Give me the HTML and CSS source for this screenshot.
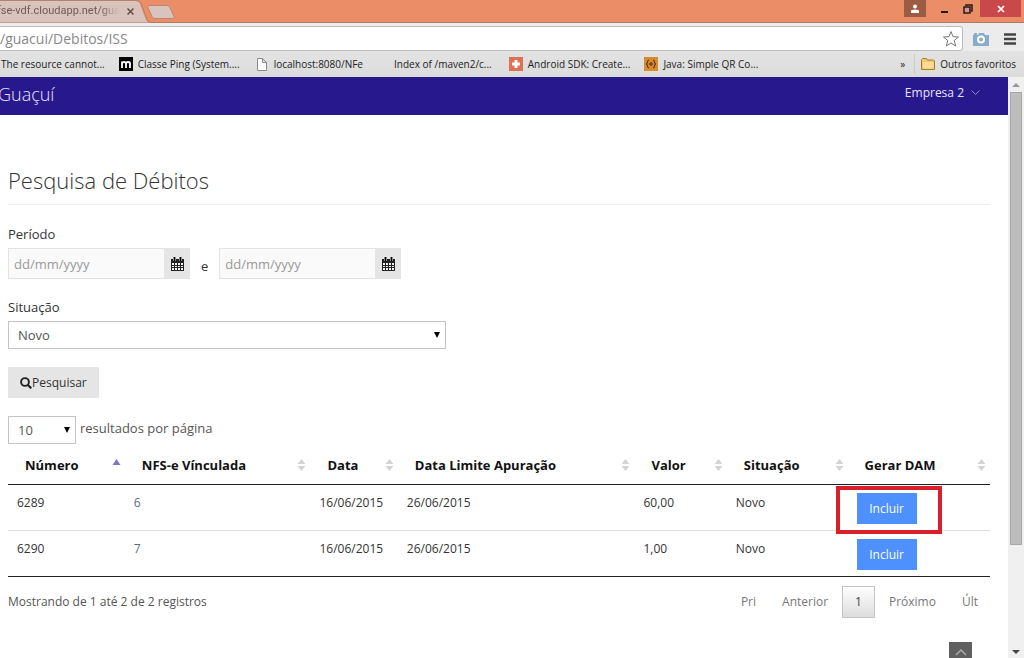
FILE: index.html
```html
<!DOCTYPE html>
<html lang="pt-BR">
<head>
<meta charset="utf-8">
<title>Pesquisa de Débitos</title>
<link rel="stylesheet" href="styles.css">
</head>
<body>
<div class="titlebar">
  <svg class="tab-shape" viewBox="0 0 176 23" width="176" height="23" aria-hidden="true">
    <path d="M0 1h136q3 0 4 3l6 16q1 2 4 2.500H0z" fill="#d9c3bd"/>
    <path d="M0 .5h136q4 0 5 3l6 16q1 3 4 3" fill="none" stroke="#b87f6a"/>
    <path d="M149 5.500h18q2 0 3 2l4 9q1 2-1 2h-18q-2 0-3-2l-4-9q-1-2 1-2z" fill="#d9c3bd" stroke="#bd8570"/>
  </svg>
  <div class="tab">
    <span class="tab-title"><span>nfse-vdf.cloudapp.net/gua</span></span>
    <button class="tab-close" aria-label="Fechar guia"><svg width="7" height="7" viewBox="0 0 7 7"><path d="M.5.5l6 6M6.500.5l-6 6" stroke="#6b4c44" stroke-width="1.500"/></svg></button>
  </div>
  <div class="window-buttons">
    <button class="win user" aria-label="Usuário"><svg width="8" height="9" viewBox="0 0 8 9"><circle cx="4" cy="2.500" r="2" fill="#fff"/><path d="M0 9V7q0-1.500 4-1.500T8 7v2z" fill="#fff"/></svg></button>
    <button class="win" aria-label="Minimizar"><svg width="10" height="10" viewBox="0 0 10 10"><path d="M1 7h7v2H1z" fill="#2b1a14"/></svg></button>
    <button class="win" aria-label="Restaurar"><svg width="10" height="10" viewBox="0 0 10 10"><path d="M3 2V1h6v6H8" fill="none" stroke="#2b1a14" stroke-width="1.500"/><rect x="1" y="3" width="6" height="6" fill="#c99" stroke="#2b1a14" stroke-width="1.500"/></svg></button>
    <button class="win close" aria-label="Fechar"><svg width="8" height="8" viewBox="0 0 8 8"><path d="M1 1l6 6M7 1L1 7" stroke="#fff" stroke-width="1.700"/></svg></button>
  </div>
</div>
<div class="toolbar">
  <div class="address">
    <input class="url" type="text" value="/guacui/Debitos/ISS" aria-label="Endereço">
    <button class="icon-button" aria-label="Favoritar"><svg width="18" height="18" viewBox="0 0 18 18"><path d="M9 1.500l2 5.200 5.500.3-4.300 3.500 1.500 5.500L9 13l-4.700 3 1.500-5.500L1.500 7 7 6.700z" fill="#fff" stroke="#777" stroke-linejoin="round"/></svg></button>
  </div>
  <button class="icon-button" aria-label="Captura de tela"><svg width="16" height="14" viewBox="0 0 16 14"><path d="M0 3h1V1h3v2h1l1-2h5l1 2h4v11H0z" fill="#8aabc9"/><circle cx="8" cy="7.500" r="4" fill="#fff"/><circle cx="8" cy="7.500" r="2" fill="#8aabc9"/></svg></button>
  <button class="icon-button" aria-label="Menu"><svg width="12" height="12" viewBox="0 0 12 12"><path d="M0 1.500h12M0 6h12M0 10.500h12" stroke="#444" stroke-width="2.500"/></svg></button>
</div>
<nav class="bookmarks" aria-label="Favoritos">
  <a class="bookmark" href="#">The resource cannot...</a>
  <a class="bookmark b-ping" href="#"><svg width="14" height="14" viewBox="0 0 14 14"><path d="M0 0h14v14H0z"/><path d="M3 11V4.500M3 6.500q0-1.500 2-1.500t2 1.500V11M7 6.500Q7 5 9 5t2 1.500V11" fill="none" stroke="#fff" stroke-width="1.800"/></svg>Classe Ping (System....</a>
  <a class="bookmark b-local" href="#"><svg width="10" height="13" viewBox="0 0 10 13"><path d="M.5.5h5l4 4v8h-9zM5.500.5v4h4" fill="#fff" stroke="#8c8c8c"/></svg>localhost:8080/NFe</a>
  <a class="bookmark b-index" href="#">Index of /maven2/c...</a>
  <a class="bookmark" href="#"><svg width="14" height="14" viewBox="0 0 14 14"><path d="M0 0h14v14H0z" fill="#dc7154"/><path d="M5.500 3h3v2.500H11v3H8.500V11h-3V8.500H3v-3h2.500z" fill="#fff"/></svg>Android SDK: Create...</a>
  <a class="bookmark" href="#"><svg width="14" height="14" viewBox="0 0 14 14"><path d="M0 0h14v14H0z" fill="#d98a2b"/><path d="M5 3Q3.500 3 3.500 5T2 7q1.500 0 1.500 2T5 11M9 3q1.500 0 1.500 2T12 7q-1.500 0-1.500 2T9 11" fill="none" stroke="#4b2b08"/><circle cx="7" cy="7" r="1.300" fill="none" stroke="#4b2b08"/></svg>Java: Simple QR Co...</a>
  <button class="more" aria-label="Mais favoritos">»</button>
  <a class="bookmark others" href="#"><svg width="14" height="12" viewBox="0 0 14 12"><path d="M.5 11.500v-10l1-1h4l1 1.500h6l1 1v8.500z" fill="#f3c667" stroke="#a77b32"/><path d="M2 4h10.500v6.500H2z" fill="#fbdc92"/></svg>Outros favoritos</a>
</nav>
<div class="viewport">
  <div class="page">
    <header class="navbar">
      <span class="brand">Guaçuí</span>
      <button class="account">Empresa 2 <svg width="9" height="6" viewBox="0 0 9 6"><path d="M.5.5l4 4 4-4" fill="none" stroke="#8f88d0"/></svg></button>
    </header>
    <main class="content">
      <h1>Pesquisa de Débitos</h1>
      <form class="search">
        <label class="field-label" for="from">Período</label>
        <div class="period">
          <div class="date"><input id="from" type="text" placeholder="dd/mm/yyyy"><button type="button" aria-label="Abrir calendário inicial"><svg width="13" height="14" viewBox="0 0 13 14"><path d="M0 2h13v12H0z" fill="#222"/><path d="M1 6h2v2H1zm3 0h2v2H4zm3 0h2v2H7zm3 0h2v2h-2zM1 9h2v1H1zm3 0h2v1H4zm3 0h2v1H7zm3 0h2v1h-2zM1 11h2v2H1zm3 0h2v2H4zm3 0h2v2H7zm3 0h2v2h-2z" fill="#f4f4f4"/><path d="M3.500 0v4M9.500 0v4" stroke="#e6e6e6" stroke-width="3"/><path d="M3.500 0v4M9.500 0v4" stroke="#000" stroke-width="1.800"/></svg></button></div>
          <label class="and" for="to">e</label>
          <div class="date"><input id="to" type="text" placeholder="dd/mm/yyyy"><button type="button" aria-label="Abrir calendário final"><svg width="13" height="14" viewBox="0 0 13 14"><path d="M0 2h13v12H0z" fill="#222"/><path d="M1 6h2v2H1zm3 0h2v2H4zm3 0h2v2H7zm3 0h2v2h-2zM1 9h2v1H1zm3 0h2v1H4zm3 0h2v1H7zm3 0h2v1h-2zM1 11h2v2H1zm3 0h2v2H4zm3 0h2v2H7zm3 0h2v2h-2z" fill="#f4f4f4"/><path d="M3.500 0v4M9.500 0v4" stroke="#e6e6e6" stroke-width="3"/><path d="M3.500 0v4M9.500 0v4" stroke="#000" stroke-width="1.800"/></svg></button></div>
        </div>
        <label class="field-label" for="status">Situação</label>
        <div class="select status"><select id="status"><option>Novo</option></select><svg width="6" height="6" viewBox="0 0 6 6"><path d="M0 0h6L3 6z"/></svg></div>
        <button class="submit" type="button"><svg width="12" height="12" viewBox="0 0 12 12"><circle cx="5" cy="5" r="3.900" fill="none" stroke="#222" stroke-width="1.900"/><path d="M8 8l3.300 3.300" stroke="#222" stroke-width="2.200"/></svg>Pesquisar</button>
      </form>
      <div class="length">
        <div class="select count"><select id="count"><option>10</option></select><svg width="6" height="6" viewBox="0 0 6 6"><path d="M0 0h6L3 6z"/></svg></div>
        <label for="count">resultados por página</label>
      </div>
      <table class="results">
        <colgroup><col class="c-number"><col class="c-nfse"><col class="c-date"><col class="c-limit"><col class="c-value"><col class="c-status"><col class="c-dam"></colgroup>
        <thead><tr>
          <th><div class="head">Número<svg width="9" height="12" viewBox="0 0 9 12"><path d="M4.500 0l4 6h-8z" fill="#7f78c0"/></svg></div></th>
          <th><div class="head">NFS-e Vínculada<svg width="9" height="12" viewBox="0 0 9 12"><path d="M4.500 0l4 5h-8zM.5 7h8l-4 5z" fill="#d4d4d4"/></svg></div></th>
          <th><div class="head">Data<svg width="9" height="12" viewBox="0 0 9 12"><path d="M4.500 0l4 5h-8zM.5 7h8l-4 5z" fill="#d4d4d4"/></svg></div></th>
          <th><div class="head">Data Limite Apuração<svg width="9" height="12" viewBox="0 0 9 12"><path d="M4.500 0l4 5h-8zM.5 7h8l-4 5z" fill="#d4d4d4"/></svg></div></th>
          <th><div class="head">Valor<svg width="9" height="12" viewBox="0 0 9 12"><path d="M4.500 0l4 5h-8zM.5 7h8l-4 5z" fill="#d4d4d4"/></svg></div></th>
          <th><div class="head">Situação<svg width="9" height="12" viewBox="0 0 9 12"><path d="M4.500 0l4 5h-8zM.5 7h8l-4 5z" fill="#d4d4d4"/></svg></div></th>
          <th><div class="head">Gerar DAM<svg width="9" height="12" viewBox="0 0 9 12"><path d="M4.500 0l4 5h-8zM.5 7h8l-4 5z" fill="#d4d4d4"/></svg></div></th>
        </tr></thead>
        <tbody>
          <tr><td>6289</td><td><a href="#">6</a></td><td>16/06/2015</td><td>26/06/2015</td><td>60,00</td><td>Novo</td><td><div class="action marked"><button class="include">Incluir</button></div></td></tr>
          <tr><td>6290</td><td><a href="#">7</a></td><td>16/06/2015</td><td>26/06/2015</td><td>1,00</td><td>Novo</td><td><div class="action"><button class="include">Incluir</button></div></td></tr>
        </tbody>
      </table>
      <div class="table-footer">
        <span>Mostrando de 1 até 2 de 2 registros</span>
        <nav class="pager" aria-label="Paginação">
          <a href="#">Pri</a><a href="#">Anterior</a><a class="current" href="#">1</a><a href="#">Próximo</a><a href="#">Últ</a>
        </nav>
      </div>
    </main>
    <button class="to-top" aria-label="Voltar ao topo"><svg width="12" height="7" viewBox="0 0 12 7"><path d="M1 6l5-5 5 5" fill="none" stroke="#aaa" stroke-width="1.500"/></svg></button>
  </div>
  <div class="scrollbar" aria-hidden="true">
    <svg width="8" height="4" viewBox="0 0 8 4"><path d="M4 0l4 4H0z" fill="#999"/></svg>
    <div class="track"><div class="thumb"></div></div>
    <svg width="8" height="4" viewBox="0 0 8 4"><path d="M0 0h8L4 4z" fill="#444"/></svg>
  </div>
</div>
</body>
</html>
```
FILE: styles.css
```css
* { box-sizing: border-box; }

body {
  margin: 0;
  height: 100vh;
  display: flex;
  flex-direction: column;
  overflow: hidden;
  background: #fff;
  color: #333;
  font: 13px/20px "Open Sans", "Noto Sans", sans-serif;
}

button, input, select { font: inherit; color: inherit; margin: 0; }
button { border: 0; padding: 0; background: none; }
a { color: inherit; text-decoration: none; }
svg { display: block; flex: none; }

/* Browser window */
.titlebar {
  position: relative;
  flex: none;
  display: flex;
  justify-content: space-between;
  height: 23px;
  background: #eb8d66;
  border-bottom: 1px solid #ad7b68;
}
.tab-shape { position: absolute; left: 0; top: 0; }
.tab {
  position: relative;
  display: flex;
  align-items: center;
  gap: 7px;
  width: 134px;
  font-family: Roboto, "Open Sans", sans-serif;
  font-size: 11px;
  color: #6d5c58;
}
.tab-title {
  flex: 1;
  display: flex;
  justify-content: flex-end;
  overflow: hidden;
  white-space: nowrap;
  mask-image: linear-gradient(to left, transparent, #000 20px);
}
.window-buttons { display: flex; height: 17px; padding-right: 3px; }
.win { width: 23px; display: flex; align-items: center; justify-content: center; }
.win.user { width: 22px; margin-right: 7px; background: #9c5c44; }
.win.close { width: 41px; margin-left: 1px; background: #c9484a; }

.toolbar {
  flex: none;
  display: flex;
  align-items: center;
  gap: 15px;
  height: 28px;
  padding: 3px 8px 0 0;
  background: #ececec;
}
.address {
  flex: 1;
  display: flex;
  align-items: center;
  height: 25px;
  margin-right: -5px;
  padding-right: 2px;
  background: #fff;
  border: 1px solid #bcbcbc;
  border-left: 0;
  border-radius: 0 3px 3px 0;
}
.url {
  flex: 1;
  border: 0;
  padding: 0;
  background: none;
  color: #888;
  font-size: 14px;
  line-height: 20px;
}
.bookmarks {
  flex: none;
  display: flex;
  align-items: center;
  height: 26px;
  padding: 0 8px 0 1px;
  background: linear-gradient(#e3e3e3, #dcdcdc);
  font-size: 10px;
  color: #222;
  white-space: nowrap;
}
.bookmark { display: flex; align-items: center; gap: 5px; margin-right: 14px; }
.b-ping { margin-right: 17px; }
.b-local { gap: 7px; margin-right: 31px; }
.b-index { margin-right: 17px; }
.more { margin-left: auto; padding-right: 9px; border-right: 1px solid #ccc; }
.others { margin: 0 0 0 6px; }

.viewport { flex: 1; min-height: 0; display: flex; }
.page { position: relative; flex: 1; min-width: 0; overflow: hidden; }
.scrollbar {
  flex: none;
  display: flex;
  flex-direction: column;
  align-items: center;
  gap: 5px;
  width: 16px;
  padding: 6px 2px 4px;
  background: #f0f0f0;
}
.track { flex: 1; align-self: stretch; }
.thumb { height: 82%; background: #bdbdbd; border: 1px solid #a8a8a8; }

/* Application */
.navbar {
  display: flex;
  justify-content: space-between;
  height: 38px;
  padding-right: 28px;
  background: #28188e;
  color: #e6e4f5;
}
.brand { margin-left: -2px; font-size: 18px; line-height: 34px; font-weight: 300; }
.account { display: flex; align-items: center; gap: 7px; height: 31px; font-size: 12px; }

.content { padding: 49px 18px 0 8px; }
h1 {
  margin: 0 0 19px;
  padding-bottom: 8px;
  border-bottom: 1px solid #eee;
  font-size: 22px;
  line-height: 32px;
  font-weight: 300;
}
.field-label { display: block; margin-bottom: 4px; }
.period { display: flex; gap: 11px; margin-bottom: 18px; }
.and { padding-top: 8px; }
.date { display: flex; width: 182px; height: 31px; }
.date input {
  flex: 1;
  min-width: 0;
  padding: 0 5px;
  background: #fafafa;
  border: 1px solid #e3e3e3;
  border-right: 0;
}
.date input::placeholder { color: #999; opacity: 1; }
.date button {
  display: flex;
  align-items: center;
  justify-content: center;
  width: 26px;
  background: #e5e5e5;
}
.select { display: grid; align-items: center; }
.select select {
  grid-area: 1 / 1;
  width: 100%;
  height: 28px;
  padding: 0 9px;
  appearance: none;
  background: #fff;
  border: 1px solid #c4c4c4;
  border-radius: 0;
  color: #555;
}
.select svg { grid-area: 1 / 1; justify-self: end; margin-right: 6px; pointer-events: none; }
.status { width: 438px; max-width: 100%; margin-bottom: 18px; }
.count { width: 68px; }
.submit {
  display: flex;
  align-items: center;
  height: 31px;
  padding: 0 12px;
  background: #e5e5e5;
  font-size: 12px;
}
.length { display: flex; gap: 4px; margin-top: 18px; color: #555; }
.length label { padding-top: 2px; }

.results {
  width: 100%;
  margin-top: 2px;
  border-collapse: collapse;
  table-layout: fixed;
  border-bottom: 1px solid #222;
}
.c-number { width: 11.9%; }
.c-nfse { width: 18.9%; }
.c-date { width: 8.9%; }
.c-limit { width: 24.1%; }
.c-value { width: 9.4%; }
.c-status { width: 12.3%; }
.c-dam { width: 14.5%; }
th { padding: 9px 4px 9px 17px; border-bottom: 1px solid #222; color: #111; text-align: left; }
.head { display: flex; align-items: center; justify-content: space-between; white-space: nowrap; }
td {
  padding: 8px 9px 6px;
  border-top: 1px solid #ddd;
  vertical-align: top;
  font-size: 12px;
}
tbody tr:first-child td { border-top-color: #222; }
td a { color: #5b6b7f; }
.action { position: relative; width: fit-content; }
.include {
  display: block;
  width: 60px;
  height: 31px;
  background: #4d90fe;
  color: #fff;
}
.marked::after {
  content: "";
  position: absolute;
  inset: -7px -25px -10px -21px;
  border: 4px solid #d9202a;
  pointer-events: none;
}

.table-footer {
  display: flex;
  justify-content: space-between;
  padding-top: 9px;
  font-size: 12px;
  line-height: 32px;
  color: #555;
}
.pager { display: flex; gap: 2px; color: #777; }
.pager a { padding: 0 12px; }
.pager .current {
  line-height: 30px;
  border: 1px solid #c4c4c4;
  background: linear-gradient(#fff, #dcdcdc);
  color: #444;
}
.to-top {
  position: absolute;
  right: 36px;
  bottom: 0;
  width: 23px;
  height: 16px;
  padding-top: 4px;
  display: flex;
  align-items: center;
  justify-content: center;
  background: #606060;
}
```
